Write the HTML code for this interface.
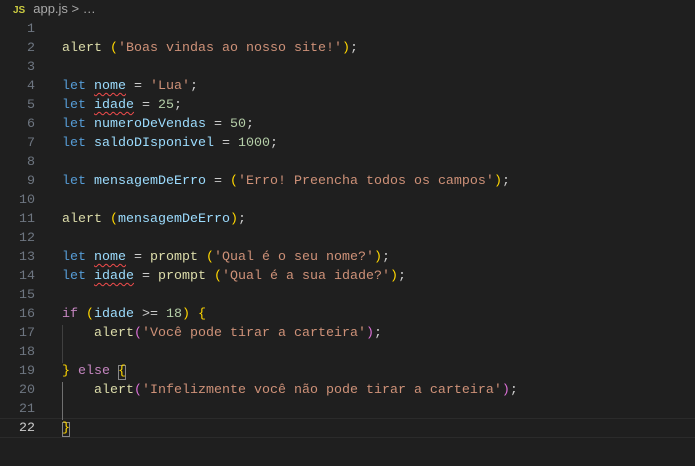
<!DOCTYPE html>
<html><head><style>
body{margin:0;width:695px;height:466px;background:#1f1f1f;overflow:hidden;font-family:"Liberation Mono",monospace;}
.bc{position:absolute;left:13px;top:0;height:17px;font:13px "Liberation Sans",sans-serif;color:#a9a9a9;line-height:17px;}
.bc b{color:#cbcb41;font-size:10px;font-weight:bold;margin-right:8px;}
.ln{position:absolute;left:0;width:35px;text-align:right;color:#6e7681;font-size:13.33px;line-height:19px;}
.c{position:absolute;left:62px;font-size:13.33px;line-height:19px;white-space:pre;color:#cccccc;}
.k{color:#569cd6}.v{color:#9cdcfe}.f{color:#dcdcaa}.s{color:#ce9178}.n{color:#b5cea8}.p{color:#c586c0}.y{color:#ffd700}.m{color:#da70d6}
.sq{text-decoration:underline wavy #f14c4c;text-underline-offset:3px;text-decoration-thickness:1px}
</style></head><body>
<div class="bc"><b>JS</b>app.js &gt; …</div>
<div style="position:absolute;left:0;right:0;top:418px;height:18px;border-top:1px solid #2b2b2b;border-bottom:1px solid #2b2b2b"></div>
<div style="position:absolute;left:62px;top:325px;width:1px;height:38px;background:#404040"></div>
<div style="position:absolute;left:62px;top:382px;width:1px;height:38px;background:#707070"></div>
<div style="position:absolute;left:118px;top:365px;width:8px;height:15px;border:1px solid #888;box-sizing:border-box"></div>
<div style="position:absolute;left:62px;top:422px;width:8px;height:15px;border:1px solid #888;box-sizing:border-box"></div>
<div class="ln" style="top:20px">1<br>2<br>3<br>4<br>5<br>6<br>7<br>8<br>9<br>10<br>11<br>12<br>13<br>14<br>15<br>16<br>17<br>18<br>19<br>20<br>21<br><span style="color:#ccc">22</span></div>
<div class="c" style="top:20px">
<span class="f">alert</span> <span class="y">(</span><span class="s">'Boas vindas ao nosso site!'</span><span class="y">)</span>;

<span class="k">let</span> <span class="v sq">nome</span> = <span class="s">'Lua'</span>;
<span class="k">let</span> <span class="v sq">idade</span> = <span class="n">25</span>;
<span class="k">let</span> <span class="v">numeroDeVendas</span> = <span class="n">50</span>;
<span class="k">let</span> <span class="v">saldoDIsponivel</span> = <span class="n">1000</span>;

<span class="k">let</span> <span class="v">mensagemDeErro</span> = <span class="y">(</span><span class="s">'Erro! Preencha todos os campos'</span><span class="y">)</span>;

<span class="f">alert</span> <span class="y">(</span><span class="v">mensagemDeErro</span><span class="y">)</span>;

<span class="k">let</span> <span class="v sq">nome</span> = <span class="f">prompt</span> <span class="y">(</span><span class="s">'Qual é o seu nome?'</span><span class="y">)</span>;
<span class="k">let</span> <span class="v sq">idade</span> = <span class="f">prompt</span> <span class="y">(</span><span class="s">'Qual é a sua idade?'</span><span class="y">)</span>;

<span class="p">if</span> <span class="y">(</span><span class="v">idade</span> &gt;= <span class="n">18</span><span class="y">)</span> <span class="y">{</span>
    <span class="f">alert</span><span class="m">(</span><span class="s">'Você pode tirar a carteira'</span><span class="m">)</span>;

<span class="y">}</span> <span class="p">else</span> <span class="y">{</span>
    <span class="f">alert</span><span class="m">(</span><span class="s">'Infelizmente você não pode tirar a carteira'</span><span class="m">)</span>;

<span class="y">}</span></div>
</body></html>
